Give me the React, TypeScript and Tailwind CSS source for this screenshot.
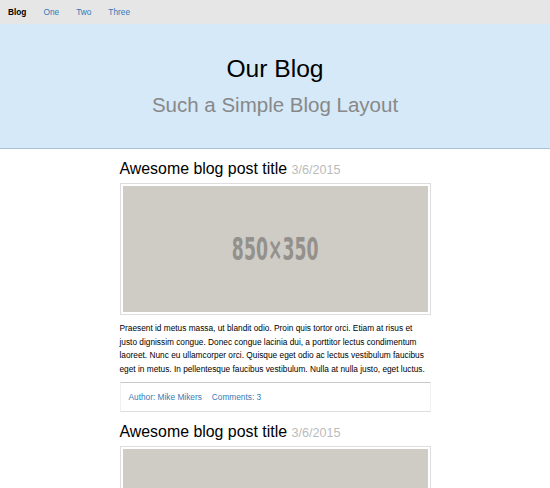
import React from 'react';

const posts = [
  {
    id: 1,
    title: 'Awesome blog post title',
    date: '3/6/2015',
    body: 'Praesent id metus massa, ut blandit odio. Proin quis tortor orci. Etiam at risus et justo dignissim congue. Donec congue lacinia dui, a porttitor lectus condimentum laoreet. Nunc eu ullamcorper orci. Quisque eget odio ac lectus vestibulum faucibus eget in metus. In pellentesque faucibus vestibulum. Nulla at nulla justo, eget luctus.',
    author: 'Mike Mikers',
    comments: 3,
  },
  {
    id: 2,
    title: 'Awesome blog post title',
    date: '3/6/2015',
    body: 'Praesent id metus massa, ut blandit odio. Proin quis tortor orci. Etiam at risus et justo dignissim congue. Donec congue lacinia dui, a porttitor lectus condimentum laoreet. Nunc eu ullamcorper orci. Quisque eget odio ac lectus vestibulum faucibus eget in metus. In pellentesque faucibus vestibulum. Nulla at nulla justo, eget luctus.',
    author: 'Mike Mikers',
    comments: 3,
  },
];

function Post({ post }: { post: (typeof posts)[number] }) {
  return (
    <article className="mt-[11px]">
      <h2 className="text-[15.9px] leading-[18px] text-black">
        {post.title} <span className="text-[12.6px] text-[#bbbbbb]">{post.date}</span>
      </h2>

      {/* Placeholder image */}
      <div className="mt-[4px] border border-[#dddddd] p-[2px]">
        <div className="flex h-[126px] items-center justify-center bg-[#cfccc6]">
          <span className="scale-x-[0.6] text-[32px] leading-none font-bold text-[#94918c] [font-family:'DejaVu_Sans',sans-serif] [font-stretch:condensed]">
            850×350
          </span>
        </div>
      </div>

      <p className="mt-[7px] text-[8.3px] leading-[13.5px] text-black">{post.body}</p>

      <div className="mt-[6px] flex gap-[10px] border-x border-t border-b border-x-[#f0f0f0] border-t-[#c8c8c8] border-b-[#dddddd] px-[8px] py-[8px] text-[8.3px] leading-[12px] text-[#337ab7]">
        <a href="#">Author: {post.author}</a>
        <a href="#">Comments: {post.comments}</a>
      </div>
    </article>
  );
}

export default function App() {
  return (
    <div className="min-h-screen bg-white font-['Liberation_Sans',Arial,sans-serif]">
      {/* Top nav */}
      <nav className="flex h-[24px] items-center bg-[#e6e6e6] pl-[8px] text-[8.3px]">
        <a href="#" className="font-bold text-black">Blog</a>
        <a href="#" className="ml-[17px] text-[#337ab7]">One</a>
        <a href="#" className="ml-[17px] text-[#337ab7]">Two</a>
        <a href="#" className="ml-[17px] text-[#337ab7]">Three</a>
      </nav>

      {/* Header */}
      <header className="flex h-[125px] flex-col items-center border-b border-[#a9c2d6] bg-[#d5e9f8] pt-[30px]">
        <h1 className="text-[24.6px] leading-[30px] text-black">Our Blog</h1>
        <p className="mt-[9px] text-[20.5px] leading-[24px] text-[#888888]">Such a Simple Blog Layout</p>
      </header>

      <main className="mx-auto w-[311px]">
        {posts.map((post) => (
          <Post key={post.id} post={post} />
        ))}
      </main>
    </div>
  );
}
